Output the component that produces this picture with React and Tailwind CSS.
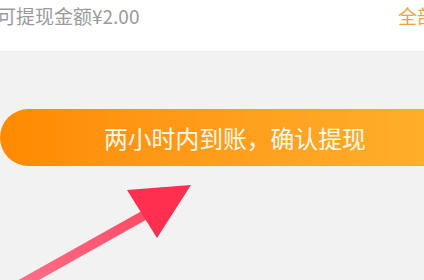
export default function App() {
  const font = { fontFamily: '"Noto Sans CJK SC", "Noto Sans", sans-serif' };
  return (
    <div className="relative w-[424px] h-[280px] overflow-hidden bg-[#f2f2f2]" style={font}>
      <div className="h-[52px] bg-white flex items-start justify-between pt-[2px] border-b border-[#ececec]">
        <span className="ml-[-3px] text-[19px] leading-[28px] text-[#9b9b9b]">可提现金额¥2.00</span>
        <span className="mr-[-12px] text-[19px] leading-[28px] text-[#f2a23a]">全部</span>
      </div>
      <div className="mt-[57px] w-[480px] h-[57px] rounded-l-full bg-gradient-to-r from-[#ff8a00] to-[#ffb32e] flex items-center pl-[104px]">
        <span className="text-[23.8px] leading-none text-[#fff8ea]">两小时内到账，确认提现</span>
      </div>
      <svg className="absolute left-0 top-0" width="424" height="280" viewBox="0 0 424 280">
        <defs>
          <linearGradient id="shaft" x1="0" y1="1" x2="1" y2="0">
            <stop offset="0" stopColor="#ff7088" />
            <stop offset="1" stopColor="#ff4a66" />
          </linearGradient>
        </defs>
        <line x1="18" y1="286" x2="150" y2="212" stroke="url(#shaft)" strokeWidth="10" />
        <polygon points="127,190 191,185 157,238" fill="#ff2f4f" />
      </svg>
    </div>
  );
}
